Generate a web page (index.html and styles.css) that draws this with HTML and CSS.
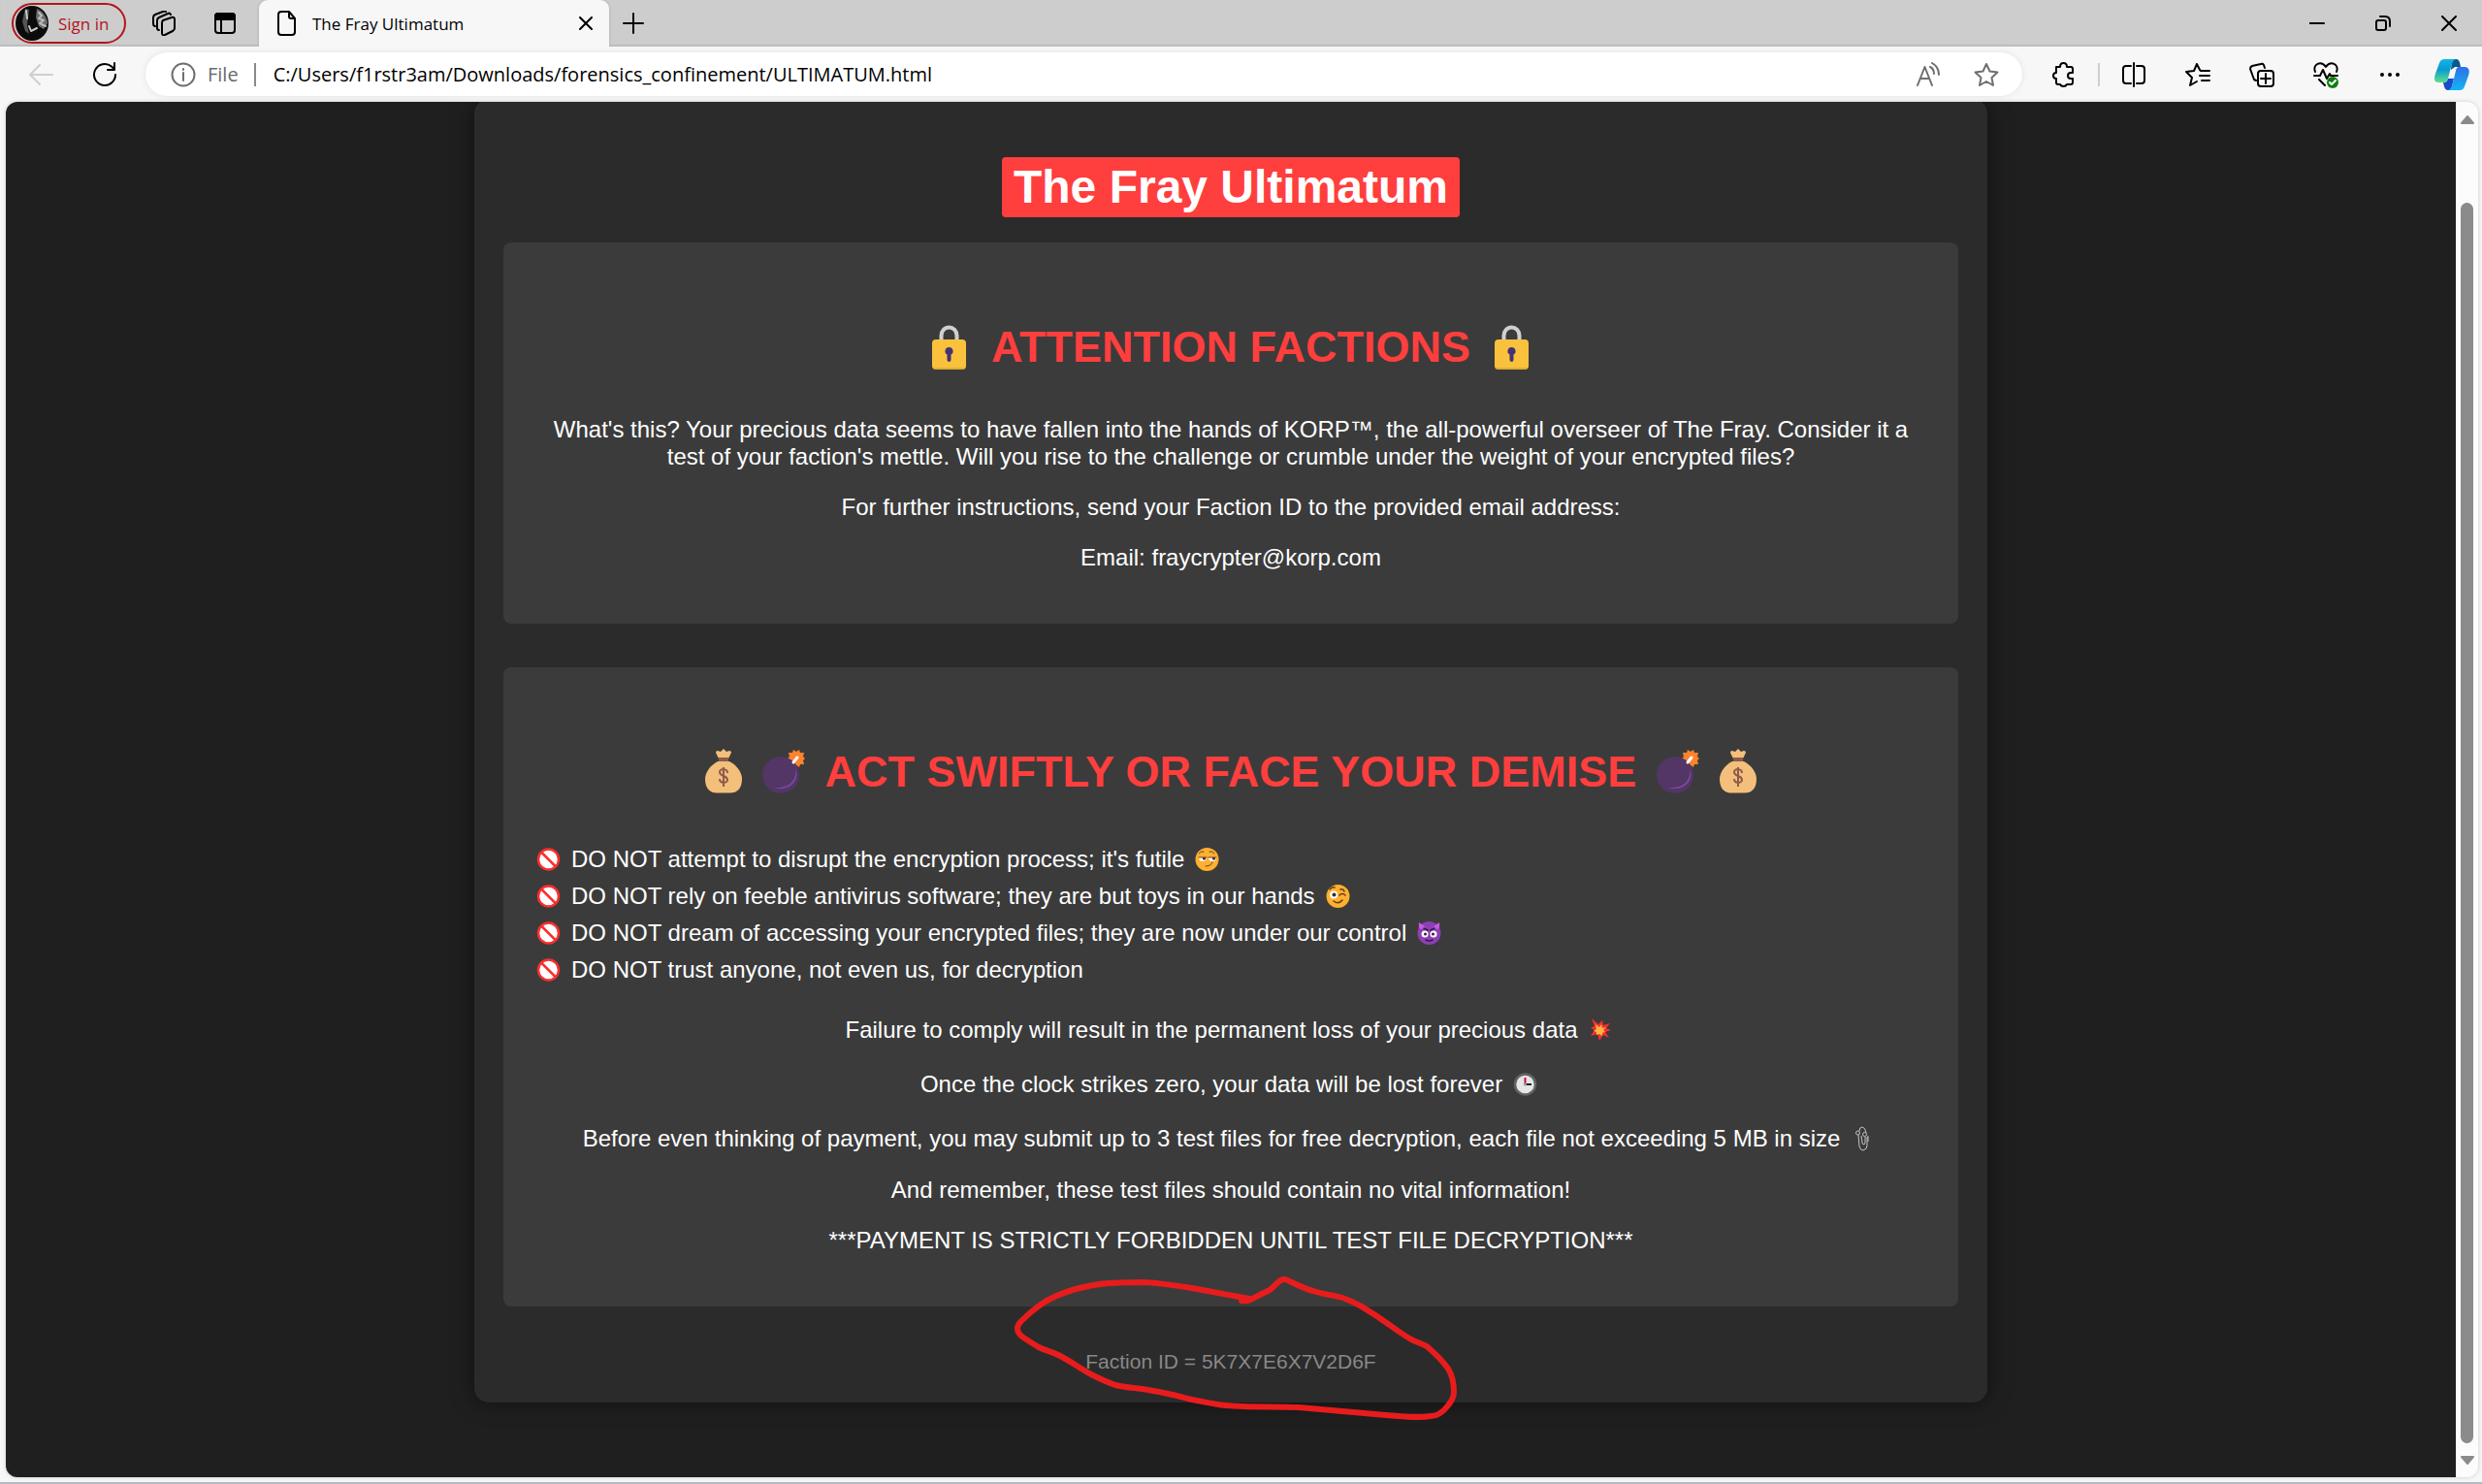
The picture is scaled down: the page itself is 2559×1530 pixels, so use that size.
FILE: index.html
```html
<!DOCTYPE html>
<html lang="en">
<head>
    <meta charset="UTF-8">
    <meta name="viewport" content="width=device-width, initial-scale=1.0">
    <title>The Fray Ultimatum</title>
    <link rel="stylesheet" href="styles.css">
</head>
<body>
    <!-- shared symbols -->
    <svg class="symbols" width="0" height="0" aria-hidden="true">
        <symbol id="lock" viewBox="0 0 62 62">
            <path d="M22.500 24V19a8 8.500 0 0 1 16 0v5" fill="none" stroke="#d0d0d0" stroke-width="4"/>
            <rect x="13" y="23" width="35" height="31" rx="4" fill="#fac23c"/>
            <path d="M15 53h31" stroke="#c8962e" stroke-width="1"/>
            <path d="M30.500 31a4 4 0 0 0-2 7.500V44a2 2 0 0 0 4 0v-5.500a4 4 0 0 0-2-7.500z" fill="#443274"/>
        </symbol>
        <symbol id="bag" viewBox="0 0 62 62">
            <path d="M26 17l-3-6q0-2 2-2l3 1 3-3 3 3 3-1q2 0 2 2l-3 6z" fill="#f3bf7a"/>
            <path d="M25 20c-8 4-13 12-13 18 0 10 5 14.500 12 14.500h14c7 0 12-4.500 12-14.500 0-6-5-14-13-18z" fill="#f3bf7a"/>
            <rect x="26" y="16" width="10" height="4" fill="#8d5a4b"/>
            <path d="M35 32c0-5-8-5-8-1 0 5 8 3 8 8 0 4-8 4-8-1M31 26v20" fill="none" stroke="#8d5a4b" stroke-width="2"/>
        </symbol>
        <symbol id="bomb" viewBox="0 0 62 62">
            <path d="M44 10l3-2 1 3 4 0-1 4 2 2-2 2 1 4-4 0-1 3-3-2-3 2-1-3-4 0 1-4-2-2 2-2-1-4 4 0 1-3z" fill="#ff822d"/>
            <circle cx="28" cy="34" r="19" fill="#533566"/>
            <path d="M43 27c6 14-8 25-22 20 14 1 24-6 22-20z" fill="#764998"/>
            <path d="M41 21l4-5" stroke="#fff" stroke-width="3" stroke-linecap="round"/>
        </symbol>
        <symbol id="forbidden" viewBox="0 0 33 32">
            <circle cx="16.500" cy="16" r="10.500" fill="#fff" stroke="#f92f2f" stroke-width="2.500"/>
            <path d="M9.500 9L24 23.500" stroke="#f92f2f" stroke-width="2.500"/>
        </symbol>
    </svg>

    <header class="browser">
        <div class="tab-strip">
            <button class="profile">
                <svg width="34" height="36" viewBox="0 0 34 36" aria-hidden="true">
                    <ellipse cx="17" cy="18" rx="17" ry="18" fill="#0b0b0b"/>
                    <path d="M10 3l-3 13 3 10 4 3-2-9 2-16z" fill="#555"/>
                    <path d="M11 5l1 8M14 21l2 5 6-3" stroke="#c9c9c9" stroke-width="2" fill="none"/>
                    <path d="M22 3c6 2 10 8 11 15l-4 6-5-3-3-9z" fill="#6d6d6d"/>
                    <path d="M24 7l3 3-3 3 5 2-4 3 6 3" stroke="#bbb" fill="none"/>
                </svg>
                <span>Sign in</span>
            </button>
            <button class="strip-button" aria-label="Workspaces">
                <svg width="26" height="26" viewBox="0 0 26 26">
                    <path d="M12 10l9-3q3-1 3 2v9q0 2-2 3l-8 4q-3 1-3-2V13q0-2 1-3zM8 20q-2 0-2-2V10q0-2 2-3l9-4q2-1 3 1M4 16q-2 0-2-3V7q0-2 2-3l8-3q2-1 3 0"/>
                </svg>
            </button>
            <button class="strip-button" aria-label="Tab actions">
                <svg width="24" height="24" viewBox="0 0 24 24">
                    <rect x="2" y="2" width="20" height="20" rx="3"/>
                    <path d="M2 8V5q0-3 3-3h14q3 0 3 3v3z" fill="#000"/>
                    <path d="M8 8v14"/>
                </svg>
            </button>
            <div class="tab">
                <svg width="20" height="26" viewBox="0 0 20 26" aria-hidden="true">
                    <path d="M4 1h8l6 7v14q0 3-3 3H4q-3 0-3-3V4q0-3 3-3zM12 1v5q0 2 2 2h4"/>
                </svg>
                <span class="tab-title">The Fray Ultimatum</span>
                <button class="tab-close" aria-label="Close tab">
                    <svg width="14" height="14" viewBox="0 0 14 14"><path d="M1 1l12 12M13 1L1 13"/></svg>
                </button>
            </div>
            <button class="new-tab" aria-label="New tab">
                <svg width="22" height="22" viewBox="0 0 22 22"><path d="M11 1v20M1 11h20"/></svg>
            </button>
            <div class="window-buttons">
                <button aria-label="Minimize">
                    <svg width="16" height="16" viewBox="0 0 16 16"><path d="M0 8h15"/></svg>
                </button>
                <button aria-label="Restore">
                    <svg width="18" height="18" viewBox="0 0 18 18">
                        <rect x="2" y="6" width="10" height="10" rx="2"/>
                        <path d="M6 2h5q5 0 5 5v5"/>
                    </svg>
                </button>
                <button aria-label="Close">
                    <svg width="16" height="16" viewBox="0 0 16 16"><path d="M1 1l14 14M15 1L1 15"/></svg>
                </button>
            </div>
        </div>

        <div class="toolbar">
            <button class="nav-button disabled" aria-label="Back">
                <svg width="26" height="24" viewBox="0 0 26 24"><path d="M12 2L2 12l10 10M2 12h23"/></svg>
            </button>
            <button class="nav-button" aria-label="Refresh">
                <svg width="26" height="26" viewBox="0 0 26 26"><path d="M24 13A11 11 0 1 1 20 4.500l3 3M23 1v7h-7"/></svg>
            </button>
            <div class="address-bar">
                <svg width="26" height="26" viewBox="0 0 26 26" aria-hidden="true">
                    <circle cx="13" cy="13" r="11.500"/>
                    <path d="M13 11v8M13 7v1"/>
                </svg>
                <label for="url">File</label>
                <span class="address-line"></span>
                <input id="url" type="text" value="C:/Users/f1rstr3am/Downloads/forensics_confinement/ULTIMATUM.html">
                <button aria-label="Read aloud">
                    <svg width="26" height="26" viewBox="0 0 26 26"><path d="M1 24L8.500 5 16 24M4 17h9M14 5q4 2 4 7M16 1q7 4 7 12"/></svg>
                </button>
                <button aria-label="Add to favorites">
                    <svg width="26" height="26" viewBox="0 0 26 26"><path d="M13 2l3.500 7.500 8 1-6 5.500 1.500 8-7-4-7 4 1.500-8-6-5.500 8-1z"/></svg>
                </button>
            </div>
            <button class="tool" aria-label="Extensions">
                <svg width="26" height="26" viewBox="0 0 26 26"><path d="M5 5h4q0-4 3.500-4T16 5h4q2 0 2 2v4h-2q-3 0-3 3t3 3h2v4q0 2-2 2h-4q-1 2-3.500 2T9 23H7q-2 0-2-2v-4q-3 0-3-3t3-3z"/></svg>
            </button>
            <span class="tool-line"></span>
            <div class="tools">
                <button class="tool" aria-label="Split screen">
                    <svg width="26" height="26" viewBox="0 0 26 26"><path d="M10 4H5Q2 4 2 7v12q0 3 3 3h5M16 4h5q3 0 3 3v12q0 3-3 3h-5M13 1v24"/></svg>
                </button>
                <button class="tool" aria-label="Favorites">
                    <svg width="26" height="26" viewBox="0 0 26 26"><path d="M16 9l-1-1-3-6-3 7-8 1 6 6-2 8 7-4M17 9h8M15 14h10M17 19h8"/></svg>
                </button>
                <button class="tool" aria-label="Collections">
                    <svg width="26" height="26" viewBox="0 0 26 26">
                        <rect x="9" y="9" width="16" height="16" rx="3"/>
                        <path d="M17 12v10M12 17h10M16 6l-1-3q-1-2-3-1L3 4Q1 5 1 7l4 11 2 1"/>
                    </svg>
                </button>
                <button class="tool" aria-label="Browser essentials">
                    <svg width="28" height="28" viewBox="0 0 28 28">
                        <path d="M3 11c-3-8 6-12 11-5 5-7 14-3 11 5M2 15h6l3-6 4 9 3-5 1 2h7M7 19l6 6"/>
                        <circle cx="21" cy="22" r="6" fill="#107c10" stroke="none"/>
                        <path d="M18 22l2 2 4-4" stroke="#fff"/>
                    </svg>
                </button>
                <button class="tool" aria-label="Settings and more">
                    <svg width="24" height="6" viewBox="0 0 24 6"><g fill="#000" stroke="none"><circle cx="4" cy="3" r="2"/><circle cx="12" cy="3" r="2"/><circle cx="20" cy="3" r="2"/></g></svg>
                </button>
            </div>
            <button class="tool copilot" aria-label="Copilot">
                <svg width="36" height="32" viewBox="0 0 36 32">
                    <defs>
                        <linearGradient id="cp-a" x1="0" y1="0" x2="0" y2="1">
                            <stop offset="0" stop-color="#10b5e8"/>
                            <stop offset=".45" stop-color="#0a9bd0"/>
                            <stop offset="1" stop-color="#5fe08a"/>
                        </linearGradient>
                        <linearGradient id="cp-b" x1="0" y1="0" x2="0" y2="1">
                            <stop offset="0" stop-color="#2f6fe4"/>
                            <stop offset="1" stop-color="#14b4f5"/>
                        </linearGradient>
                    </defs>
                    <g stroke="none">
                        <path d="M18 0h4c3 0 4 2 5 8h-6l-4 3z" fill="#07588f"/>
                        <path d="M9 24c3 0 4-1 5-4h6l-3 12h-3c-3 0-4-3-5-8z" fill="#1a4bc9"/>
                        <path d="M10 0h12c-3 1-4 4-5 8l-3 12c-1 3-2 4-5 4H4c-4 0-5-3-3-9l4-11c1-3 3-4 5-4z" fill="url(#cp-a)"/>
                        <path d="M26 8h5c4 0 6 3 4 9l-4 11c-1 3-3 4-5 4H14c3-1 4-4 5-8l3-12c1-3 1-4 4-4z" fill="url(#cp-b)"/>
                    </g>
                </svg>
            </button>
        </div>
    </header>

    <div class="viewport">
        <main class="page">
            <div class="container">
                <h1><span>The Fray Ultimatum</span></h1>

                <section class="message">
                    <h2>
                        <svg class="emoji-large" aria-hidden="true"><use href="#lock"/></svg>
                        <span>ATTENTION FACTIONS</span>
                        <svg class="emoji-large" aria-hidden="true"><use href="#lock"/></svg>
                    </h2>
                    <p>What's this? Your precious data seems to have fallen into the hands of KORP™, the all-powerful overseer of The Fray. Consider it a test of your faction's mettle. Will you rise to the challenge or crumble under the weight of your encrypted files?</p>
                    <p>For further instructions, send your Faction ID to the provided email address:</p>
                    <p>Email: fraycrypter@korp.com</p>
                </section>

                <section class="message">
                    <h2>
                        <span class="emoji-pair">
                            <svg class="emoji-large" aria-hidden="true"><use href="#bag"/></svg>
                            <svg class="emoji-large" aria-hidden="true"><use href="#bomb"/></svg>
                        </span>
                        <span>ACT SWIFTLY OR FACE YOUR DEMISE</span>
                        <span class="emoji-pair">
                            <svg class="emoji-large" aria-hidden="true"><use href="#bomb"/></svg>
                            <svg class="emoji-large" aria-hidden="true"><use href="#bag"/></svg>
                        </span>
                    </h2>
                    <ul class="rules">
                        <li>
                            <svg class="emoji" aria-hidden="true"><use href="#forbidden"/></svg>
                            <span>DO NOT attempt to disrupt the encryption process; it's futile</span>
                            <svg class="emoji" viewBox="0 0 33 32" aria-hidden="true">
                                <circle cx="16.500" cy="16" r="12" fill="#ffb02e"/>
                                <path d="M8 14h8q0 4-4 4t-4-4zM18 14h8q0 4-4 4t-4-4z" fill="#fff"/>
                                <path d="M12 14h3v2q-1.500 1-3 0zM22 14h3v2q-1.500 1-3 0z" fill="#402a32"/>
                                <path d="M8 14h8M18 14h8M8 10q2-3 5-2M19 8q3-1 5 2M15 23q6 0 7-4" fill="none" stroke="#6b3b2b" stroke-width="1" stroke-linecap="round"/>
                            </svg>
                        </li>
                        <li>
                            <svg class="emoji" aria-hidden="true"><use href="#forbidden"/></svg>
                            <span>DO NOT rely on feeble antivirus software; they are but toys in our hands</span>
                            <svg class="emoji" viewBox="0 0 33 32" aria-hidden="true">
                                <circle cx="16.500" cy="16" r="12" fill="#ffb02e"/>
                                <circle cx="12" cy="14.500" r="4" fill="#fff"/>
                                <circle cx="12.500" cy="14.500" r="2" fill="#402a32"/>
                                <path d="M18 15q3-3 6 0M8 9q2-3 5-2M19 9q3-1 4 2M12 21q5 4 9-1" fill="none" stroke="#5b3a24" stroke-width="1.500" stroke-linecap="round"/>
                            </svg>
                        </li>
                        <li>
                            <svg class="emoji" aria-hidden="true"><use href="#forbidden"/></svg>
                            <span>DO NOT dream of accessing your encrypted files; they are now under our control</span>
                            <svg class="emoji" viewBox="0 0 33 32" aria-hidden="true">
                                <circle cx="16.500" cy="16" r="12" fill="#8d3fb3"/>
                                <path d="M6 5q4 2 7 6l-6 1q-2-3-1-7zM27 5q-4 2-7 6l6 1q2-3 1-7z" fill="#c35ce0"/>
                                <circle cx="12" cy="17" r="3.500" fill="#fff"/>
                                <circle cx="21" cy="17" r="3.500" fill="#fff"/>
                                <circle cx="12.500" cy="17" r="1.500" fill="#321b41"/>
                                <circle cx="20.500" cy="17" r="1.500" fill="#321b41"/>
                                <path d="M11 11l4 2M22 11l-4 2M13 23q3.500 2 7 0" fill="none" stroke="#321b41" stroke-width="1.500" stroke-linecap="round"/>
                            </svg>
                        </li>
                        <li>
                            <svg class="emoji" aria-hidden="true"><use href="#forbidden"/></svg>
                            <span>DO NOT trust anyone, not even us, for decryption</span>
                        </li>
                    </ul>
                    <p class="with-emoji">
                        <span>Failure to comply will result in the permanent loss of your precious data</span>
                        <svg class="emoji" viewBox="0 0 33 32" aria-hidden="true">
                            <path d="M7 4l7 6 4-4 1 5 7-2-4 5 5 2-6 2 4 6-6-3-4 6-2-7-7 2 4-6-4-2 4-2z" fill="#f92f2f"/>
                            <path d="M11 10l4 3 2-3 1 4 4-1-3 3 2 2-3 1v3l-3-2-3 1v-3l-3-1 3-2z" fill="#fcb53f"/>
                        </svg>
                    </p>
                    <p class="with-emoji">
                        <span>Once the clock strikes zero, your data will be lost forever</span>
                        <svg class="emoji" viewBox="0 0 33 32" aria-hidden="true">
                            <circle cx="16.500" cy="16" r="10.500" fill="#e6e6e6" stroke="#636363" stroke-width="2.500"/>
                            <path d="M16.500 17V9" stroke="#ca0b4a" stroke-width="2"/>
                            <path d="M17 16h6" stroke="#212121" stroke-width="2"/>
                            <circle cx="16.500" cy="16" r="1.500" fill="#9b9b9b"/>
                        </svg>
                    </p>
                    <p class="with-emoji">
                        <span>Before even thinking of payment, you may submit up to 3 test files for free decryption, each file not exceeding 5 MB in size</span>
                        <svg class="emoji" viewBox="0 0 33 32" aria-hidden="true">
                            <g fill="none" stroke="#c4c4c4" stroke-width="1">
                                <path d="M12 12l1 12q1 4 4 4 4-1 4-5V14M15 13l1 7q0 2 2 2 1-1 1-3v-5M13 8q0-4 3-4t4 6M22 13v6"/>
                                <circle cx="11.500" cy="10" r="2"/>
                                <circle cx="18.500" cy="11.500" r="2"/>
                            </g>
                        </svg>
                    </p>
                    <p>And remember, these test files should contain no vital information!</p>
                    <p>***PAYMENT IS STRICTLY FORBIDDEN UNTIL TEST FILE DECRYPTION***</p>
                </section>

                <footer class="faction">
                    Faction ID = 5K7X7E6X7V2D6F
                    <svg class="marker" width="560" height="230" viewBox="0 0 560 230" aria-hidden="true">
                        <path d="M280 43Q285 44 289 42L309 32C316 27 319 20 325 21C331 23 340 29 354 33C366 37 374 37 384 40C399 45 409 52 421 60C436 70 443 76 455 83C461 86 466 87 471 90C478 96 488 106 493 113C498 121 499 129 499 137C499 144 496 147 493 151C487 159 482 162 475 162C465 164 452 163 429 161L339 153C315 152 285 153 264 151C252 150 240 147 229 145C213 141 203 138 189 136C175 133 162 133 150 130C141 127 133 123 125 119C114 113 106 107 95 101C86 96 79 95 71 91C65 87 59 84 54 80C50 77 49 75 49 72C49 68 51 66 54 63Q63 54 73 47C83 40 95 35 109 31C120 28 130 26 143 25Q161 24 179 24C196 25 211 27 229 30L288 41"/>
                    </svg>
                </footer>
            </div>
        </main>
        <div class="scrollbar" aria-hidden="true">
            <svg width="16" height="10" viewBox="0 0 16 10"><path d="M2 9h12l-6-7z"/></svg>
            <div class="thumb"></div>
            <svg width="16" height="10" viewBox="0 0 16 10"><path d="M2 1h12l-6 7z"/></svg>
        </div>
    </div>
</body>
</html>
```

FILE: styles.css
```css
* {
    box-sizing: border-box;
}
body {
    margin: 0;
    min-height: 100vh;
    display: flex;
    flex-direction: column;
    background-color: #f7f7f7;
    border-bottom: 2px solid #b4b8c4;
    font-family: "Liberation Sans", Arial, sans-serif;
}
button {
    display: flex;
    align-items: center;
    justify-content: center;
    padding: 0;
    border: none;
    background: none;
    font: inherit;
    cursor: pointer;
}
svg {
    display: block;
    flex-shrink: 0;
}
.symbols {
    position: absolute;
}

/* browser chrome */
.browser {
    font-family: "Open Sans", "Noto Sans", sans-serif;
}
.browser svg {
    fill: none;
    stroke: #000;
    stroke-width: 2;
    stroke-linejoin: round;
    stroke-linecap: round;
}
.tab-strip {
    display: flex;
    height: 48px;
    padding-left: 12px;
    background-color: #cdcdcd;
    box-shadow: inset 0 -2px 1px #bdbdbd;
}
.profile {
    width: 118px;
    height: 42px;
    margin: 3px 25px 0 0;
    justify-content: flex-start;
    gap: 10px;
    padding-left: 2px;
    border: 2px solid #b3151b;
    border-radius: 21px;
    color: #b3151b;
    font-size: 17px;
}
.profile svg {
    stroke: none;
}
.strip-button {
    width: 28px;
    margin-right: 35px;
}
.tab {
    display: flex;
    align-items: center;
    width: 361px;
    margin-left: -14px;
    padding: 0 17px 0 19px;
    border-radius: 9px 9px 0 0;
    background-color: #f7f7f7;
    box-shadow: 0 0 3px #aaa;
    clip-path: inset(0 -4px 0 -4px);
}
.tab-title {
    flex: 1;
    margin-left: 16px;
    font-size: 17px;
}
.new-tab {
    width: 50px;
}
.window-buttons {
    display: flex;
    margin-left: auto;
}
.window-buttons button {
    width: 68px;
}
.toolbar {
    display: flex;
    align-items: center;
    height: 57px;
    padding: 0 7px 0 18px;
}
.nav-button {
    width: 48px;
    height: 48px;
    margin-right: 18px;
}
.nav-button.disabled svg {
    stroke: #cfcfcf;
}
.address-bar {
    flex: 1;
    display: flex;
    align-items: center;
    height: 45px;
    margin-right: 19px;
    padding: 0 13px 0 26px;
    border-radius: 23px;
    background-color: #fff;
    box-shadow: 0 0 6px #e2e2e2;
    color: #6a6a6a;
    font-size: 20px;
}
.address-bar svg {
    stroke: #6f6f6f;
}
.address-bar label {
    margin-left: 12px;
}
.address-line {
    width: 2px;
    height: 24px;
    margin: 0 18px 0 16px;
    background-color: #8a8a8a;
}
.address-bar input {
    flex: 1;
    padding: 0;
    border: none;
    outline: none;
    background: none;
    color: #000;
    font: inherit;
}
.address-bar button {
    width: 48px;
    margin-left: 11px;
}
.tool {
    width: 48px;
    height: 48px;
}
.tool-line {
    width: 2px;
    height: 24px;
    margin: 0 11px;
    background-color: #cfcfcf;
}
.tools {
    display: flex;
    gap: 18px;
}
.copilot {
    margin-left: 16px;
}

/* page area */
.viewport {
    flex: 1;
    display: flex;
    margin: 0 4px 5px 6px;
    border-radius: 12px;
    overflow: hidden;
    box-shadow: 0 0 4px #ccc;
}
.page {
    flex: 1;
    overflow: hidden;
    background-color: #1f1f1f;
}
.container {
    max-width: 1560px;
    margin: -3px auto 0;
    padding: 30px;
    border-radius: 15px;
    background-color: #2b2b2b;
    box-shadow: 0 0 22px rgba(0, 0, 0, 0.5);
    color: #fff;
    font-size: 24px;
    line-height: 28px;
    text-align: center;
}
h1 {
    display: flex;
    justify-content: center;
    margin: 30px 0 26px;
    font-size: 48px;
    line-height: 62px;
}
h1 span {
    padding: 0 12px;
    border-radius: 4px;
    background-color: #ff3e3e;
}
.message {
    margin-bottom: 45px;
    padding: 30px;
    border-radius: 8px;
    background-color: #3b3b3b;
}
h2 {
    display: flex;
    align-items: center;
    justify-content: center;
    gap: 12px;
    margin: 40px 0 34px;
    color: #ff3e3e;
    font-size: 45px;
    line-height: 75px;
}
.emoji-pair {
    display: flex;
}
.emoji-large {
    width: 62px;
    height: 62px;
}
.emoji {
    width: 33px;
    height: 32px;
}
.message p {
    margin: 24px 0;
}
.rules {
    margin: 0 0 26px;
    padding: 0;
    list-style: none;
}
.rules li {
    display: flex;
    align-items: center;
    gap: 7px;
    height: 38px;
}
.message .with-emoji {
    display: flex;
    align-items: center;
    justify-content: center;
    gap: 7px;
    height: 32px;
    padding-top: 2px;
}
.faction {
    position: relative;
    color: #888;
    font-size: 21px;
    line-height: 24px;
}
/* hand-drawn ring around the faction id */
.marker {
    position: absolute;
    top: -94px;
    left: calc(50% - 269px);
    fill: none;
    stroke: #e81c1c;
    stroke-width: 6;
    stroke-linecap: round;
    stroke-linejoin: round;
}
.scrollbar {
    display: flex;
    flex-direction: column;
    align-items: center;
    width: 23px;
    padding: 13px 0 12px;
    background-color: #fcfcfc;
}
.scrollbar svg {
    fill: #8b8b8b;
    stroke: #8b8b8b;
    stroke-width: 2;
    stroke-linejoin: round;
}
.thumb {
    flex: 1;
    width: 13px;
    margin: 81px 0 13px;
    border-radius: 7px;
    background-color: #8b8b8b;
}
```
